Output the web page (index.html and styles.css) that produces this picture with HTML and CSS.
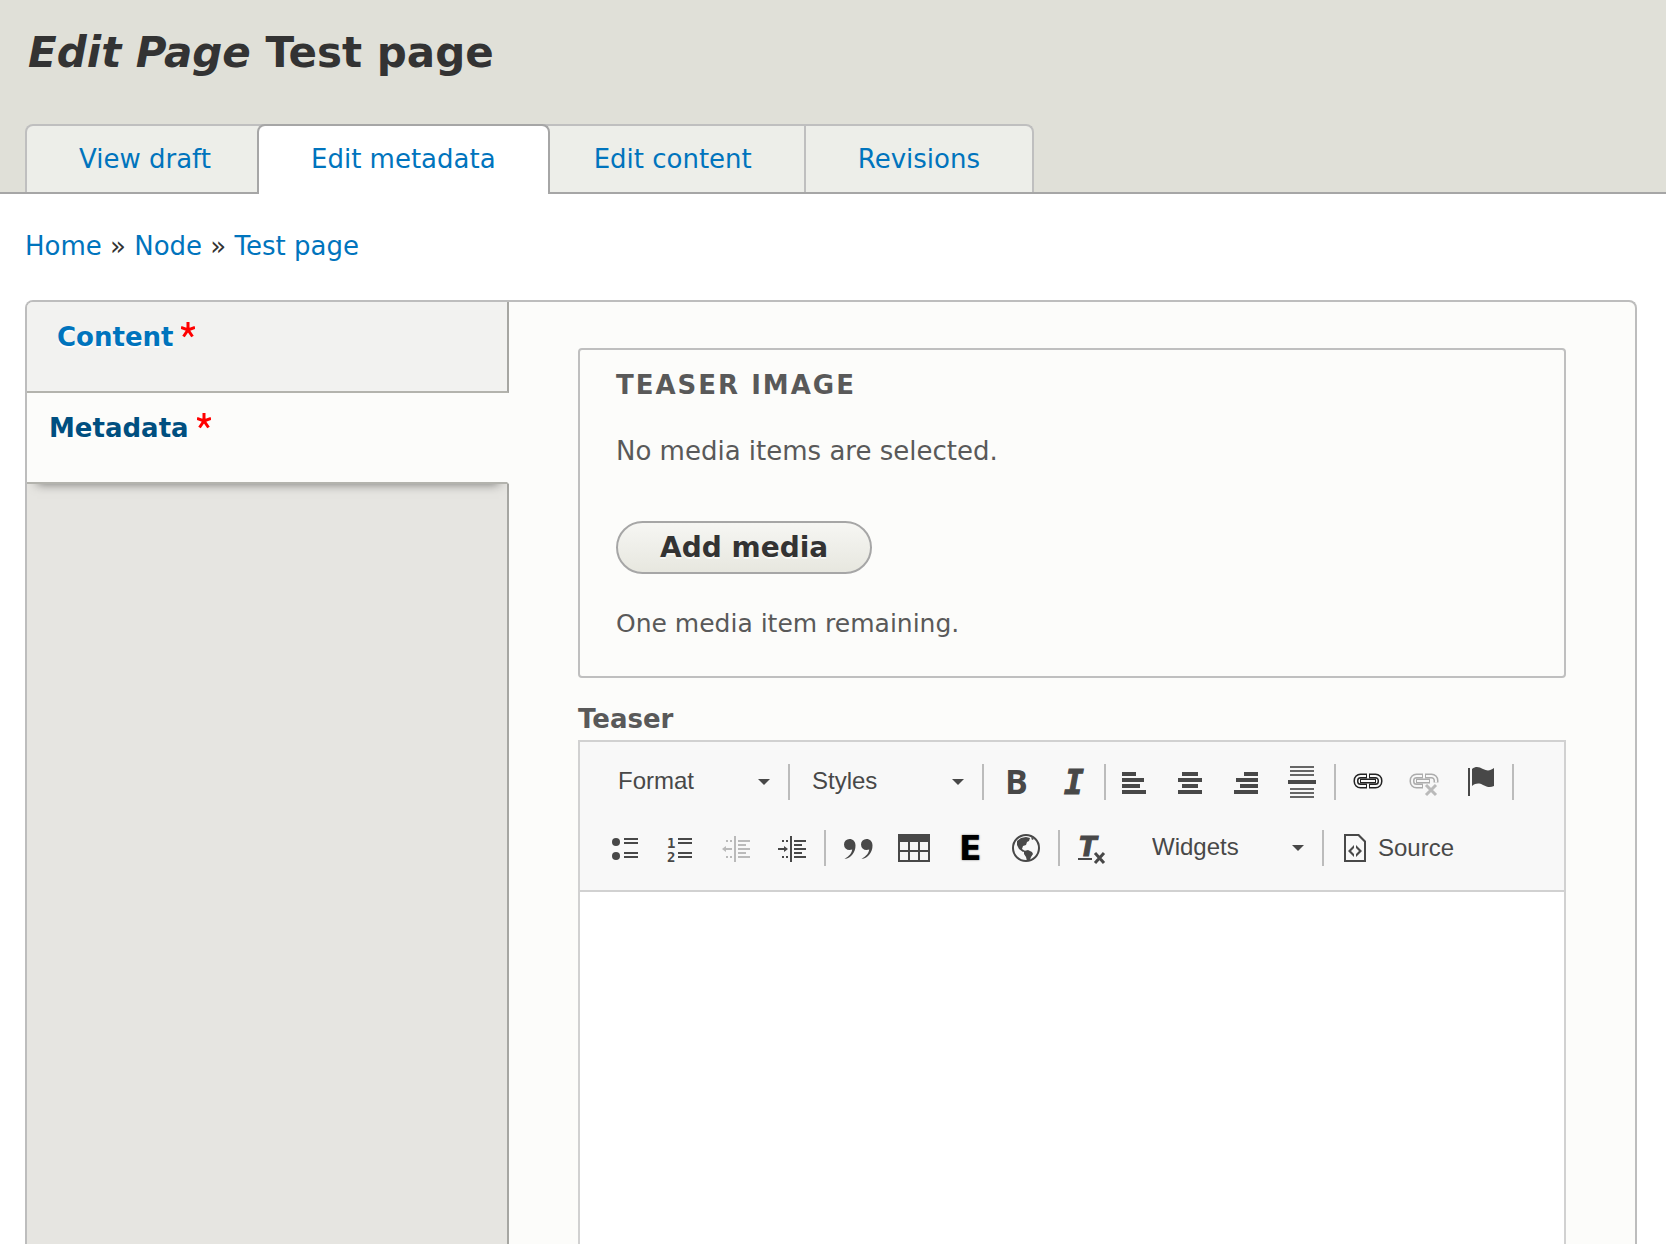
FILE: index.html
```html
<!DOCTYPE html>
<html lang="en">
<head>
<meta charset="utf-8">
<meta name="viewport" content="width=device-width, initial-scale=1">
<title>Edit Page Test page</title>
<link rel="stylesheet" href="styles.css">
</head>
<body>
<header class="page-header">
  <h1 class="page-title"><em>Edit Page</em> Test page</h1>
  <nav class="tabs" aria-label="Primary tabs">
    <a class="tab" href="#view">View draft</a>
    <a class="tab is-active" href="#metadata" aria-current="page">Edit metadata</a>
    <a class="tab" href="#content">Edit content</a>
    <a class="tab" href="#revisions">Revisions</a>
  </nav>
</header>

<nav class="breadcrumb" aria-label="Breadcrumb">
  <a href="#home">Home</a> » <a href="#node">Node</a> » <a href="#page">Test page</a>
</nav>

<main class="vertical-tabs">
  <nav class="menu" aria-label="Form sections">
    <a class="menu-item" href="#content-pane">Content<svg class="required" viewBox="0 0 14 16" role="img" aria-label="required"><path d="M7 0v8M0 5.500l7 2.500 7-2.500M2.500 14.500L7 8l4.500 6.500" /></svg></a>
    <a class="menu-item is-selected" href="#metadata-pane">Metadata<svg class="required" viewBox="0 0 14 16" role="img" aria-label="required"><path d="M7 0v8M0 5.500l7 2.500 7-2.500M2.500 14.500L7 8l4.500 6.500" /></svg></a>
  </nav>

  <form class="pane">
    <fieldset class="media">
      <legend class="media-title">Teaser image</legend>
      <p class="media-empty">No media items are selected.</p>
      <button class="button" type="button">Add media</button>
      <p class="media-note">One media item remaining.</p>
    </fieldset>

    <label class="field-label" for="teaser">Teaser</label>
    <div class="editor">
      <div class="toolbar" role="toolbar" aria-label="Editor toolbar">
        <div class="row">
          <div class="combo combo-first">
            <select aria-label="Paragraph format"><option>Format</option></select>
            <svg class="arrow" viewBox="0 0 12 6"><path d="M0 0h12L6 6z"/></svg>
          </div>
          <span class="sep"></span>
          <div class="combo">
            <select aria-label="Formatting styles"><option>Styles</option></select>
            <svg class="arrow" viewBox="0 0 12 6"><path d="M0 0h12L6 6z"/></svg>
          </div>
          <span class="sep"></span>
          <button class="tool" type="button" aria-label="Bold"><svg viewBox="0 0 56 48"><text class="glyph-bold" x="17" y="36">B</text></svg></button>
          <button class="tool" type="button" aria-label="Italic"><svg viewBox="0 0 56 48"><text class="glyph-italic" x="20" y="36">I</text></svg></button>
          <span class="sep"></span>
          <button class="tool" type="button" aria-label="Align left"><svg viewBox="0 0 56 48"><path d="M12 14h14v4H12zM12 20h22v4H12zM12 26h18v4H12zM12 32h24v4H12z"/></svg></button>
          <button class="tool" type="button" aria-label="Center"><svg viewBox="0 0 56 48"><path d="M16 14h16v4H16zM12 20h24v4H12zM16 26h16v4H16zM12 32h24v4H12z"/></svg></button>
          <button class="tool" type="button" aria-label="Align right"><svg viewBox="0 0 56 48"><path d="M22 14h14v4H22zM14 20h22v4H14zM18 26h18v4H18zM12 32h24v4H12z"/></svg></button>
          <button class="tool tool-narrow" type="button" aria-label="Horizontal line"><svg viewBox="0 0 52 48"><path class="soft" d="M12 8h24v2H12zM12 12h24v2H12zM12 16h24v2H12zM12 30h24v2H12zM12 34h24v2H12zM12 38h24v2H12z"/><path d="M10 22h28v4H10z"/></svg></button>
          <span class="sep"></span>
          <button class="tool" type="button" aria-label="Link"><svg class="chain" viewBox="0 0 56 48"><path class="chain-edge" d="M27 18h-6.500a4.500 4.500 0 0 0-4.500 4.500v1a4.500 4.500 0 0 0 4.500 4.500H27M29 18h6.500a4.500 4.500 0 0 1 4.500 4.500v1a4.500 4.500 0 0 1-4.500 4.500H29"/><path class="chain-core" d="M26 18h-5.500a4.500 4.500 0 0 0-4.500 4.500v1a4.500 4.500 0 0 0 4.500 4.500H26M30 18h5.500a4.500 4.500 0 0 1 4.500 4.500v1a4.500 4.500 0 0 1-4.500 4.500H30"/><path class="chain-edge" d="M20 23h16"/><path class="chain-core" d="M21 23h14"/></svg></button>
          <button class="tool" type="button" aria-label="Unlink" disabled><svg class="chain" viewBox="0 0 56 48"><path class="chain-edge" d="M27 18h-6.500a4.500 4.500 0 0 0-4.500 4.500v1a4.500 4.500 0 0 0 4.500 4.500H27M29 18h6.500a4.500 4.500 0 0 1 4.500 4.500v2"/><path class="chain-core" d="M26 18h-5.500a4.500 4.500 0 0 0-4.500 4.500v1a4.500 4.500 0 0 0 4.500 4.500H26M30 18h5.500a4.500 4.500 0 0 1 4.500 4.500v2"/><path class="chain-edge" d="M20 23h14"/><path class="chain-core" d="M21 23h12"/><path class="cross" d="M30 27l10 10M40 27L30 37"/></svg></button>
          <button class="tool" type="button" aria-label="Anchor"><svg viewBox="0 0 56 48"><path d="M16 10h2v28h-2zM20 11c4-3 7-2 11 0s7 2 11-1v18c-4 2-7 1-11-1s-7-2-11 1z"/></svg></button>
          <span class="sep"></span>
        </div>
        <div class="row">
          <button class="tool" type="button" aria-label="Bulleted list"><svg viewBox="0 0 56 48"><circle cx="20" cy="18" r="4"/><circle cx="20" cy="32" r="4"/><path d="M28 14h14v2H28zM28 18h14v2H28zM28 28h14v2H28zM28 32h14v2H28z"/></svg></button>
          <button class="tool" type="button" aria-label="Numbered list"><svg viewBox="0 0 56 48"><text class="glyph-num" x="15" y="24">1</text><text class="glyph-num" x="15" y="38">2</text><path d="M26 14h14v2H26zM26 18h14v2H26zM26 28h14v2H26zM26 32h14v2H26z"/></svg></button>
          <button class="tool" type="button" aria-label="Decrease indent" disabled><svg viewBox="0 0 56 48"><path d="M26 12h2v26h-2zM18 16h2v2h-2zM22 16h2v2h-2zM18 32h2v2h-2zM22 32h2v2h-2zM30 16h12v2H30zM30 20h8v2h-8zM30 24h12v2H30zM30 28h8v2h-8zM30 32h12v2H30zM14 25l4-3v2h6v2h-6v2z"/></svg></button>
          <button class="tool" type="button" aria-label="Increase indent"><svg viewBox="0 0 56 48"><path d="M26 12h2v26h-2zM18 16h2v2h-2zM22 16h2v2h-2zM18 32h2v2h-2zM22 32h2v2h-2zM30 16h12v2H30zM30 20h8v2h-8zM30 24h12v2H30zM30 28h8v2h-8zM30 32h12v2H30zM24 25l-4-3v2h-6v2h6v2z"/></svg></button>
          <span class="sep"></span>
          <button class="tool" type="button" aria-label="Block quote"><svg viewBox="0 0 56 48"><path id="quote" d="M19.500 15a5.500 5.500 0 0 0 0 11c1 0 2-.2 2.700-.5-.4 3.500-2.700 6.500-7.700 9.500 7-1 11-7 11-13.500 0-4-2.500-6.500-6-6.500z"/><use href="#quote" x="17"/></svg></button>
          <button class="tool" type="button" aria-label="Table"><svg viewBox="0 0 56 48"><path fill-rule="evenodd" d="M12 10h32v28H12zM14 18v8h8v-8zM24 18v8h8v-8zM34 18v8h8v-8zM14 28v8h8v-8zM24 28v8h8v-8zM34 28v8h8v-8z"/></svg></button>
          <button class="tool" type="button" aria-label="Embed entity"><svg viewBox="0 0 56 48"><text class="glyph-embed" x="17" y="36">E</text></svg></button>
          <button class="tool" type="button" aria-label="Language"><svg viewBox="0 0 56 48"><circle class="ring" cx="28" cy="24" r="13"/><path d="M19 17l4-3 5-1 4 1-1 3-2 1-1 3-3 1-1 3 3 2-2 1-4-3-2-4zM33 13l3 2-2 1zM26 27l4-1 4 2 1 2-2 3-1 3-3 1-1-4-2-3z"/></svg></button>
          <span class="sep"></span>
          <button class="tool" type="button" aria-label="Remove format"><svg viewBox="0 0 56 48"><text class="glyph-clear" x="15" y="32">T</text><path d="M14 34h14v2H14z"/><path class="cross" d="M31 29l9 10M40 29l-9 10"/></svg></button>
          <div class="combo combo-widgets">
            <select aria-label="Widgets"><option>Widgets</option></select>
            <svg class="arrow" viewBox="0 0 12 6"><path d="M0 0h12L6 6z"/></svg>
          </div>
          <span class="sep"></span>
          <button class="tool-source" type="button"><svg viewBox="0 0 22 28"><path fill-rule="evenodd" d="M0 0h15l7 7v21H0zM2 2v24h18V8l-6-6z"/><path d="M10 11v3l-3 3 3 3v3l-6-6zM12 11v3l3 3-3 3v3l6-6z"/></svg>Source</button>
        </div>
      </div>
      <textarea class="editor-text" id="teaser"></textarea>
    </div>
  </form>
</main>
</body>
</html>
```
FILE: styles.css
```css
* {
  box-sizing: border-box;
}

body {
  display: flex;
  flex-direction: column;
  min-height: 100vh;
  margin: 0;
  background: #fff;
  color: #333;
  font: 26px/40px "DejaVu Sans", sans-serif;
}

a {
  color: #0074bd;
  text-decoration: none;
}

p {
  margin: 0;
}

/* Header and primary tabs */
.page-header {
  padding: 25px 25px 0;
  border-bottom: 2px solid #a6a6a6;
  background: #e0e0d8;
}

.page-title {
  margin: 0 0 43px;
  padding-left: 3px;
  font-size: 42px;
  line-height: 56px;
}

.tabs {
  display: flex;
  margin-bottom: -2px;
}

.tab {
  margin-bottom: 2px;
  padding: 13px 52px;
  border: solid #bfbfbf;
  border-width: 2px 2px 0 0;
  background: #edeee9;
}

.tab:first-child {
  border-left-width: 2px;
  border-top-left-radius: 8px;
}

.tab:last-child {
  border-top-right-radius: 8px;
}

.tab.is-active {
  z-index: 1;
  margin: 0 -8px;
  padding-bottom: 15px;
  border-width: 2px 2px 0;
  border-color: #a6a6a6;
  border-radius: 8px 8px 0 0;
  background: #fff;
}

.breadcrumb {
  padding: 32px 25px 34px;
}

/* Vertical tabs */
.vertical-tabs {
  display: flex;
  flex: 1;
  margin: 0 29px 0 25px;
  border: 2px solid #bdbdbd;
  border-bottom: 0;
  border-radius: 8px 8px 0 0;
  background: #fcfcfa;
}

.menu {
  width: round(down, 30%, 1px);
  background: linear-gradient(#a6a6a2, #a6a6a2) right / 2px 100% no-repeat #e6e5e1;
  border-top-left-radius: 6px;
}

.menu-item {
  display: block;
  padding: 15px 30px 34px;
  border: solid #b3b3ad;
  border-width: 0 2px 2px 0;
  border-right-color: #a6a6a2;
  border-top-left-radius: 6px;
  background: #f2f2f0;
  font-weight: bold;
  text-shadow: 0 2px #fff;
}

.menu-item.is-selected {
  padding-left: 22px;
  border-right-color: #fcfcfa;
  border-radius: 0;
  background: #fcfcfa;
  box-shadow: 0 10px 10px -10px rgba(0, 0, 0, 0.5);
  clip-path: inset(0 0 -20px 0);
  color: #004f80;
}

.required {
  width: 14px;
  height: 16px;
  margin-left: 8px;
  vertical-align: 8px;
  fill: none;
  stroke: #f00;
  stroke-width: 3;
}

.pane {
  display: flex;
  flex: 1;
  flex-direction: column;
  padding: 46px 69px 0;
  color: #595959;
}

.media {
  margin: 0 0 21px;
  padding: 15px 36px 32px;
  border: 2px solid #bfbfbf;
  border-radius: 4px;
}

.media-title {
  float: left;
  width: 100%;
  margin-bottom: 26px;
  padding: 0;
  font-weight: bold;
  letter-spacing: 2px;
  text-transform: uppercase;
}

.media-empty {
  clear: both;
  margin-bottom: 50px;
}

.button {
  display: block;
  height: 53px;
  margin-bottom: 30px;
  padding: 0 42px;
  border: 2px solid #a6a6a6;
  border-radius: 27px;
  background: linear-gradient(#f6f6f3, #e7e7df);
  color: #333;
  font: bold 28px/40px "DejaVu Sans", sans-serif;
  text-shadow: 0 2px rgba(255, 255, 255, 0.6);
}

.media-note {
  font-size: 25px;
}

.field-label {
  margin-bottom: 1px;
  font-weight: bold;
}

/* Rich text editor */
.editor {
  display: flex;
  flex: 1;
  flex-direction: column;
  border: 2px solid #d1d1d1;
  border-bottom: 0;
}

.toolbar {
  display: flex;
  flex-direction: column;
  gap: 18px;
  padding: 16px 16px 18px;
  border-bottom: 2px solid #d1d1d1;
  background: #f8f8f8;
}

.row {
  display: flex;
  align-items: center;
  height: 48px;
}

.sep {
  width: 2px;
  height: 36px;
  margin: 0 4px;
  background: #bcbcbc;
}

.combo {
  display: flex;
  align-items: center;
  width: 184px;
  padding: 0 14px 0 18px;
}

.combo-first {
  margin-left: 4px;
}

.combo-widgets {
  margin-left: 14px;
}

.combo select {
  flex: 1;
  min-width: 0;
  margin: 0;
  padding: 0 0 2px;
  border: 0;
  appearance: none;
  background: none;
  color: #484848;
  font: 24px/32px "Liberation Sans", sans-serif;
}

.arrow {
  width: 12px;
  height: 6px;
  fill: #484848;
}

.tool {
  width: 56px;
  height: 48px;
  padding: 0;
  border: 0;
  background: none;
}

.tool-narrow {
  width: 52px;
}

.tool svg {
  display: block;
  width: 100%;
  height: 100%;
  fill: #484848;
}

.tool:disabled {
  opacity: 0.35;
}

.tool .soft {
  fill: #666;
}

.tool .chain {
  fill: none;
}

.chain-edge {
  stroke: #222;
  stroke-width: 5;
}

.chain-core {
  stroke: #f8f8f8;
  stroke-width: 2;
}

.tool .ring {
  fill: none;
  stroke: #484848;
  stroke-width: 2;
}

.tool .cross {
  stroke: #484848;
  stroke-width: 3;
}

.glyph-bold {
  font: bold 34px "Open Sans", sans-serif;
}

.glyph-italic {
  stroke: #484848;
  font: italic bold 33px "DejaVu Sans Mono", monospace;
}

.glyph-num {
  font: bold 14px "DejaVu Sans Mono", monospace;
}

.glyph-embed {
  fill: #000;
  font: bold 33px "DejaVu Sans", sans-serif;
  text-shadow: 0 0 2px rgba(0, 0, 0, 0.6);
}

.glyph-clear {
  stroke: #484848;
  font: italic bold 26px "DejaVu Sans", sans-serif;
}

.tool-source {
  display: flex;
  align-items: center;
  gap: 12px;
  padding: 0 16px;
  border: 0;
  background: none;
  color: #484848;
  font: 24px/48px "Liberation Sans", sans-serif;
}

.tool-source svg {
  width: 22px;
  height: 28px;
  fill: #484848;
}

.editor-text {
  flex: 1;
  width: 100%;
  padding: 20px;
  border: 0;
  outline: 0;
  background: #fff;
  resize: none;
  font: 26px/40px "DejaVu Sans", sans-serif;
}
```
